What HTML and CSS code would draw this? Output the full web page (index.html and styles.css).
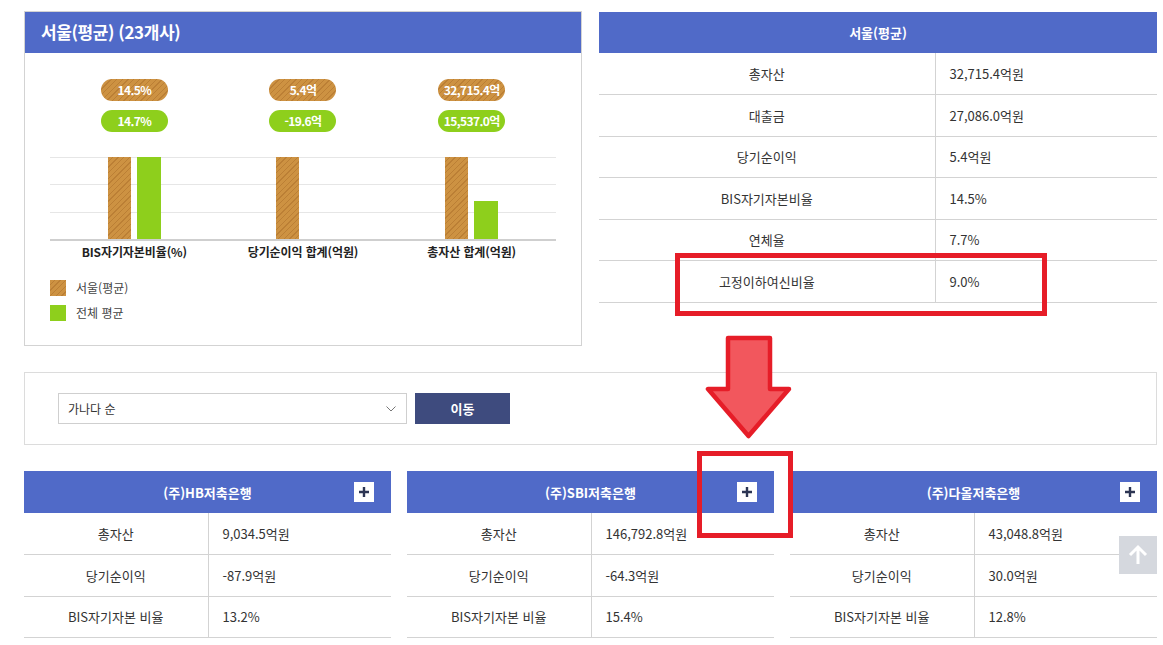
FILE: index.html
```html
<!DOCTYPE html>
<html lang="ko">
<head>
<meta charset="utf-8">
<title>저축은행 현황</title>
<link rel="stylesheet" href="styles.css">
</head>
<body>
<div class="page">
  <div class="top">
    <section class="chart-card">
      <h2 class="card-title">서울(평균) (23개사)</h2>
      <div class="chart">
        <div class="pills">
          <div class="pill-col"><span class="pill orange">14.5%</span><span class="pill green">14.7%</span></div>
          <div class="pill-col"><span class="pill orange">5.4억</span><span class="pill green">-19.6억</span></div>
          <div class="pill-col"><span class="pill orange">32,715.4억</span><span class="pill green">15,537.0억</span></div>
        </div>
        <div class="plot">
          <div class="bars"><span class="bar orange" style="height:82px"></span><span class="bar green" style="height:82px"></span></div>
          <div class="bars"><span class="bar orange" style="height:82px"></span><span class="bar green" style="height:0px"></span></div>
          <div class="bars"><span class="bar orange" style="height:82px"></span><span class="bar green" style="height:38px"></span></div>
        </div>
        <div class="labels">
          <span>BIS자기자본비율(%)</span>
          <span>당기순이익 합계(억원)</span>
          <span>총자산 합계(억원)</span>
        </div>
        <ul class="legend">
          <li><span class="swatch orange"></span>서울(평균)</li>
          <li><span class="swatch green"></span>전체 평균</li>
        </ul>
      </div>
    </section>

    <section class="summary">
      <table class="summary-table">
        <thead><tr><th colspan="2">서울(평균)</th></tr></thead>
        <tbody>
          <tr><td>총자산</td><td>32,715.4억원</td></tr>
          <tr><td>대출금</td><td>27,086.0억원</td></tr>
          <tr><td>당기순이익</td><td>5.4억원</td></tr>
          <tr><td>BIS자기자본비율</td><td>14.5%</td></tr>
          <tr><td>연체율</td><td>7.7%</td></tr>
          <tr><td>고정이하여신비율</td><td>9.0%</td></tr>
        </tbody>
      </table>
    </section>
  </div>

  <div class="filter">
    <div class="select">
      <span>가나다 순</span>
      <svg class="chev" width="10" height="6" viewBox="0 0 10 6"><path d="M0.5 0.5 L5 5 L9.5 0.5" fill="none" stroke="#777" stroke-width="1"/></svg>
    </div>
    <button class="btn" type="button">이동</button>
  </div>

  <div class="banks">
    <section class="bank">
      <div class="bank-head">(주)HB저축은행<span class="plus"><svg width="12" height="12" viewBox="0 0 12 12"><path d="M6 1 V11 M1 6 H11" stroke="#2c3553" stroke-width="2.4"/></svg></span></div>
      <table class="bank-table">
        <tr><td>총자산</td><td>9,034.5억원</td></tr>
        <tr><td>당기순이익</td><td>-87.9억원</td></tr>
        <tr><td>BIS자기자본 비율</td><td>13.2%</td></tr>
      </table>
    </section>
    <section class="bank">
      <div class="bank-head">(주)SBI저축은행<span class="plus"><svg width="12" height="12" viewBox="0 0 12 12"><path d="M6 1 V11 M1 6 H11" stroke="#2c3553" stroke-width="2.4"/></svg></span></div>
      <table class="bank-table">
        <tr><td>총자산</td><td>146,792.8억원</td></tr>
        <tr><td>당기순이익</td><td>-64.3억원</td></tr>
        <tr><td>BIS자기자본 비율</td><td>15.4%</td></tr>
      </table>
    </section>
    <section class="bank">
      <div class="bank-head">(주)다올저축은행<span class="plus"><svg width="12" height="12" viewBox="0 0 12 12"><path d="M6 1 V11 M1 6 H11" stroke="#2c3553" stroke-width="2.4"/></svg></span></div>
      <table class="bank-table">
        <tr><td>총자산</td><td>43,048.8억원</td></tr>
        <tr><td>당기순이익</td><td>30.0억원</td></tr>
        <tr><td>BIS자기자본 비율</td><td>12.8%</td></tr>
      </table>
    </section>
  </div>

  <div class="mark mark-row"></div>
  <div class="mark mark-plus"></div>
  <svg class="arrow" width="87" height="105" viewBox="0 0 87 105">
    <path d="M23 3 H65 V54 H84 L43.5 101 L3 54 H23 Z" fill="#f2575d" stroke="#e61d28" stroke-width="4.5" stroke-linejoin="round"/>
  </svg>
  <div class="to-top">
    <svg width="22" height="22" viewBox="0 0 22 22"><path d="M11 20 V3 M3 11 L11 3 L19 11" fill="none" stroke="#fff" stroke-width="3"/></svg>
  </div>
</div>
</body>
</html>
```

FILE: styles.css
```css
* { box-sizing: border-box; }

body {
  margin: 0;
  background: #fff;
  font-family: "Noto Sans CJK KR", "Noto Sans", sans-serif;
  color: #333;
}

.page {
  position: relative;
  width: 1163px;
  height: 645px;
  padding: 11px 0 0 24px;
  overflow: hidden;
}

.top {
  display: grid;
  grid-template-columns: 558px 558px;
  column-gap: 17px;
  width: 1133px;
  align-items: start;
}

/* chart card */
.chart-card {
  border: 1px solid #d3d3d3;
  height: 335px;
}

.card-title {
  margin: 0;
  height: 41px;
  line-height: 40px;
  background: #506ac8;
  color: #fff;
  font-size: 17px;
  font-weight: 700;
  padding-left: 16px;
  letter-spacing: -0.4px;
}

.chart {
  padding: 26px 25px 0 25px;
}

.pills {
  display: grid;
  grid-template-columns: repeat(3, 1fr);
}

.pill-col {
  display: flex;
  flex-direction: column;
  align-items: center;
  gap: 9px;
}

.pill {
  display: block;
  width: 67px;
  height: 22px;
  border-radius: 11px;
  color: #fff;
  font-size: 12px;
  font-weight: 700;
  line-height: 22px;
  text-align: center;
  letter-spacing: -0.6px;
}

.orange {
  background: repeating-linear-gradient(135deg, #cd9242 0 3px, #bb7f35 3px 4px);
}

.green {
  background: #8ecf1c;
}

.plot {
  margin-top: 25px;
  height: 84px;
  border-bottom: 2px solid #cfcfcf;
  display: grid;
  grid-template-columns: repeat(3, 1fr);
  background-image:
    linear-gradient(#e6e6e6, #e6e6e6),
    linear-gradient(#e6e6e6, #e6e6e6),
    linear-gradient(#e6e6e6, #e6e6e6);
  background-size: 100% 1px;
  background-repeat: no-repeat;
  background-position: 0 0, 0 27px, 0 55px;
}

.bars {
  display: flex;
  justify-content: center;
  align-items: flex-end;
  gap: 6px;
}

.bar { display: block; width: 23px; }
.bar.green { width: 24px; }

.labels {
  display: grid;
  grid-template-columns: repeat(3, 1fr);
  margin-top: 2px;
  text-align: center;
  font-size: 12px;
  font-weight: 700;
  line-height: 18px;
  color: #222;
  letter-spacing: -0.1px;
}

.legend {
  list-style: none;
  margin: 19px 0 0;
  padding: 0;
  display: flex;
  flex-direction: column;
  gap: 9px;
}

.legend li {
  display: flex;
  align-items: center;
  gap: 10px;
  font-size: 12px;
  line-height: 16px;
  color: #444;
}

.swatch {
  width: 16px;
  height: 16px;
  display: block;
}

/* summary table */
.summary { margin-top: 1px; }

.summary-table {
  width: 558px;
  border-collapse: collapse;
  font-size: 13px;
}

.summary-table th {
  height: 41px;
  background: #506ac8;
  color: #fff;
  font-weight: 700;
  font-size: 13px;
  text-align: center;
}

.summary-table td {
  height: 41.5px;
  border-bottom: 1px solid #d3d3d3;
  color: #333;
}

.summary-table td:first-child {
  width: 336px;
  text-align: center;
  border-right: 1px solid #d3d3d3;
}

.summary-table td:last-child {
  padding-left: 14px;
}

/* filter */
.filter {
  margin-top: 26px;
  width: 1133px;
  height: 73px;
  border: 1px solid #dcdcdc;
  display: flex;
  align-items: center;
  padding-left: 33px;
  gap: 8px;
}

.select {
  width: 349px;
  height: 31px;
  border: 1px solid #cfcfcf;
  display: flex;
  align-items: center;
  justify-content: space-between;
  padding: 0 10px 0 9px;
  font-size: 12px;
  color: #333;
}

.btn {
  width: 95px;
  height: 31px;
  border: 0;
  background: #3e4b7e;
  color: #fff;
  font-family: inherit;
  font-size: 13px;
  font-weight: 700;
  padding: 0;
}

/* banks */
.banks {
  margin-top: 26px;
  width: 1133px;
  display: grid;
  grid-template-columns: repeat(3, 367px);
  column-gap: 16px;
}

.bank-head {
  position: relative;
  height: 42px;
  background: #506ac8;
  color: #fff;
  font-size: 13px;
  font-weight: 700;
  display: flex;
  align-items: center;
  justify-content: center;
}

.plus {
  position: absolute;
  right: 17px;
  top: 11px;
  width: 20px;
  height: 20px;
  background: #fff;
  display: flex;
  align-items: center;
  justify-content: center;
}

.bank-table {
  width: 100%;
  border-collapse: collapse;
  font-size: 13px;
}

.bank-table td {
  height: 41.5px;
  border-bottom: 1px solid #d3d3d3;
  color: #333;
}

.bank-table td:first-child {
  width: 184px;
  text-align: center;
  border-right: 1px solid #d3d3d3;
}

.bank-table td:last-child {
  padding-left: 14px;
}

/* annotation overlays */
.mark {
  position: absolute;
  border: 5px solid #e61d28;
}

.mark-row {
  left: 675px;
  top: 253px;
  width: 372px;
  height: 63px;
}

.mark-plus {
  left: 697px;
  top: 451px;
  width: 96px;
  height: 87px;
}

.arrow {
  position: absolute;
  left: 705px;
  top: 335px;
}

.to-top {
  position: absolute;
  left: 1119px;
  top: 536px;
  width: 38px;
  height: 38px;
  background: #d5d8de;
  display: flex;
  align-items: center;
  justify-content: center;
}
```
